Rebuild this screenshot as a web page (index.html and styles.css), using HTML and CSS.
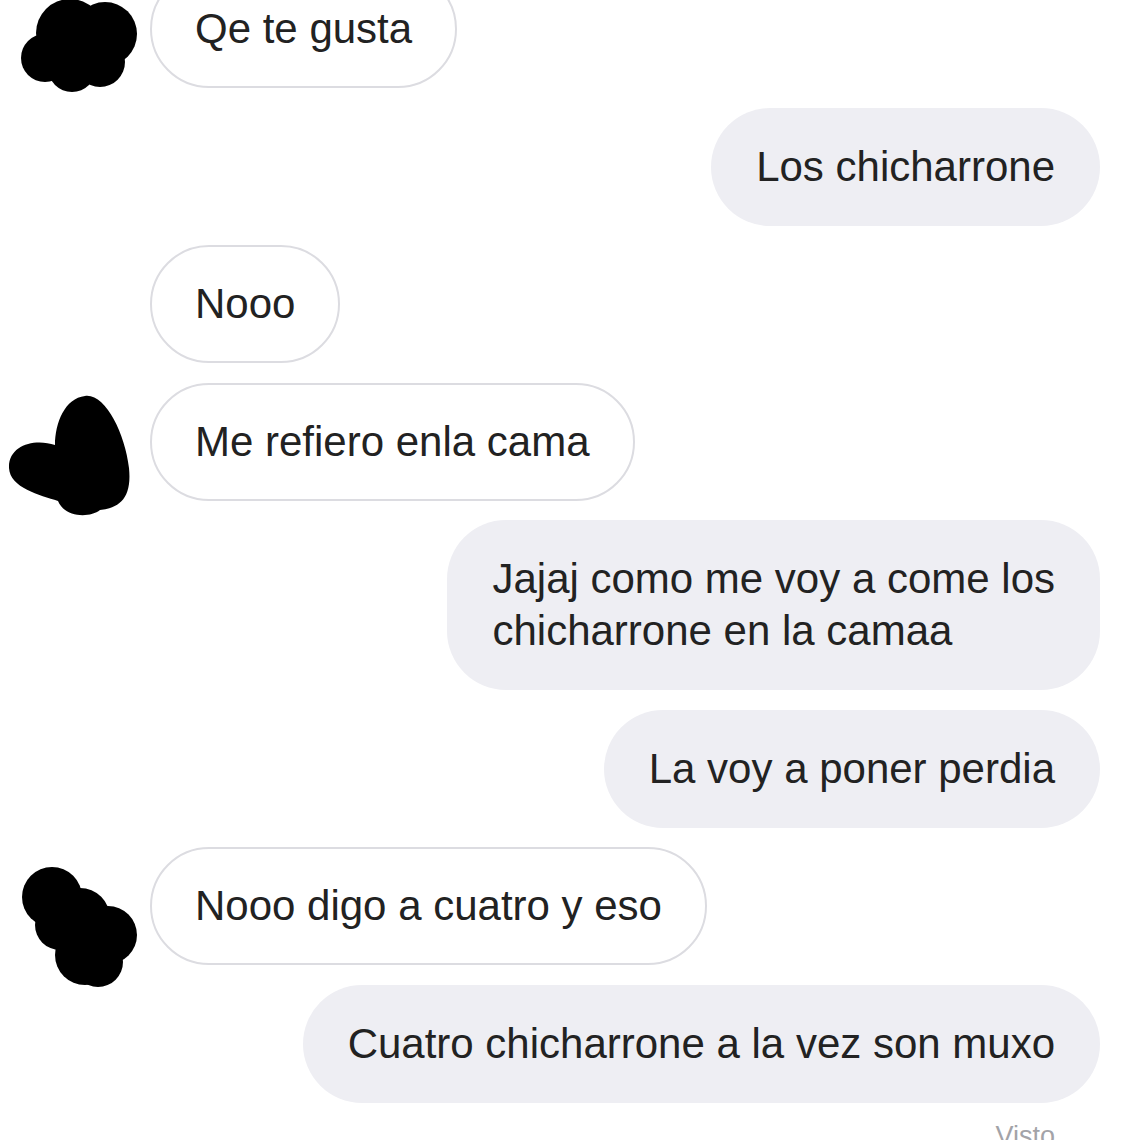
FILE: index.html
```html
<!DOCTYPE html>
<html lang="es">
<head>
  <meta charset="UTF-8" />
  <meta name="viewport" content="width=device-width, initial-scale=1.0" />
  <title>Chat</title>
  <link rel="stylesheet" href="styles.css">
</head>
<body>

<div class="chat">

  <!-- recibido -->
  <div class="row in">
    <svg class="avatar" viewBox="0 0 150 118" width="150" height="118">
      <circle cx="45" cy="88" r="24"/>
      <circle cx="70" cy="63" r="34"/>
      <circle cx="105" cy="64" r="32"/>
      <circle cx="72" cy="98" r="24"/>
      <circle cx="100" cy="92" r="25"/>
    </svg>
    <div class="bubble">Qe te gusta</div>
  </div>

  <div class="row out">
    <div class="bubble">Los chicharrone</div>
  </div>

  <div class="row in">
    <div class="avatar"></div>
    <div class="bubble">Nooo</div>
  </div>

  <div class="row in">
    <svg class="avatar" viewBox="0 0 150 118" width="150" height="118">
      <path d="M85 13 C105 10 125 50 129 85 C132 115 120 125 100 127 C90 135 65 135 58 118 C40 112 10 105 9 85 C8 62 35 55 55 62 C55 40 65 15 85 13 Z"/>
    </svg>
    <div class="bubble">Me refiero enla cama</div>
  </div>

  <div class="row out">
    <div class="bubble">Jajaj como me voy a come los<br>chicharrone en la camaa</div>
  </div>

  <div class="row out">
    <div class="bubble">La voy a poner perdia</div>
  </div>

  <div class="row in">
    <svg class="avatar" viewBox="0 0 150 118" width="150" height="118">
      <circle cx="52" cy="50" r="30"/>
      <circle cx="80" cy="71" r="30"/>
      <circle cx="108" cy="88" r="29"/>
      <circle cx="85" cy="108" r="30"/>
      <circle cx="98" cy="115" r="25"/>
      <circle cx="60" cy="78" r="25"/>
    </svg>
    <div class="bubble">Nooo digo a cuatro y eso</div>
  </div>

  <div class="row out">
    <div class="bubble">Cuatro chicharrone a la vez son muxo</div>
  </div>

  <div class="seen">Visto</div>

</div>

</body>
</html>
```

FILE: styles.css
```css
html, body {
  margin: 0;
  padding: 0;
  background: #fff;
  overflow: hidden;
  box-sizing: border-box;
}
*, *::before, *::after {
  box-sizing: inherit;
}
.chat {
  display: flex;
  flex-direction: column;
  gap: 19.5px;
  margin-top: -30px;
  font-family: "Liberation Sans", Arial, sans-serif;
  font-size: 42px;
  color: #222;
}
.row {
  display: flex;
  align-items: flex-start;
}
.row.out {
  justify-content: flex-end;
  padding-right: 25px;
}
.avatar {
  flex: 0 0 150px;
  width: 150px;
  height: 118px;
  overflow: visible;
  fill: #000;
}
.bubble {
  line-height: 52px;
  padding: 33px 45px;
  border-radius: 59px;
  white-space: nowrap;
}
.in .bubble {
  background: #fff;
  border: 2px solid #dcdce1;
  padding: 31px 43px;
}
.out .bubble {
  background: #eeeef3;
}
.seen {
  text-align: right;
  padding-right: 70px;
  margin-top: -2px;
  font-size: 27px;
  line-height: 32px;
  color: #a3a3a8;
}
```
